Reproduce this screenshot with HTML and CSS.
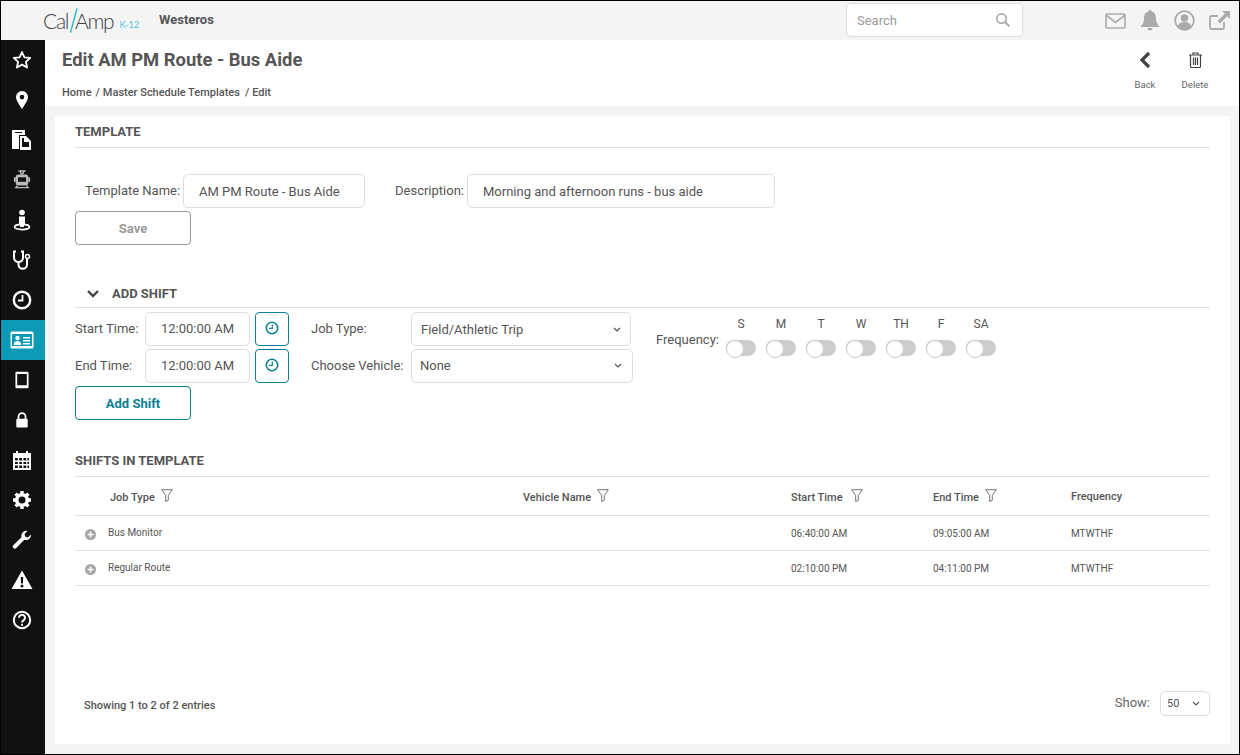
FILE: index.html
```html
<!DOCTYPE html>
<html lang="en">
<head>
<meta charset="utf-8">
<title>Edit AM PM Route - Bus Aide</title>
<link rel="stylesheet" href="styles.css">
</head>
<body>
<div class="app">
  <header class="topbar">
    <div class="logo"><span class="logo-cal">Cal</span><svg class="logo-slash" width="9" height="25" viewBox="0 0 9 25"><path d="M8 .5 1.500 24.500" stroke="#29b4d0" stroke-width="1.300" fill="none"/></svg><span class="logo-amp">Amp</span><span class="logo-k">K-12</span></div>
    <div class="org">Westeros</div>
    <div class="search">
      <span class="search-text">Search</span>
      <svg class="search-icon" width="15" height="15" viewBox="0 0 16 16"><circle cx="7" cy="7" r="5" fill="none" stroke="#aaa" stroke-width="1.800"/><path d="m10.800 10.800 4 4" stroke="#aaa" stroke-width="2.200" stroke-linecap="round"/></svg>
    </div>
    <div class="top-icons">
      <svg width="21" height="16" viewBox="0 0 21 16"><rect x="1" y="1" width="19" height="14" rx="1" fill="none" stroke="#aaa" stroke-width="1.600"/><path d="m1.500 2.500 9 7 9-7" fill="none" stroke="#aaa" stroke-width="1.600"/></svg>
      <svg width="20" height="21" viewBox="0 0 20 21"><path d="M10 0c1 0 1.600.7 1.600 1.600 3 .7 4.400 3.300 4.400 6.400 0 4 1 6 3 8v1H1v-1c2-2 3-4 3-8 0-3.100 1.400-5.700 4.400-6.400C8.400.7 9 0 10 0ZM7.500 18h5a2.500 2.500 0 0 1-5 0Z" fill="#aaa"/></svg>
      <svg width="21" height="21" viewBox="0 0 21 21"><circle cx="10.500" cy="10.500" r="9.300" fill="none" stroke="#aaa" stroke-width="1.800"/><circle cx="10.500" cy="8" r="3.800" fill="#aaa"/><path d="M3.800 16.500c1-3.500 3.500-4.500 6.700-4.500s5.700 1 6.700 4.500c-3.500 3.800-9.900 3.800-13.400 0Z" fill="#aaa"/></svg>
      <svg width="21" height="19" viewBox="0 0 21 19"><path d="M15 11v5.500a1.500 1.500 0 0 1-1.500 1.500h-11A1.500 1.500 0 0 1 1 16.500v-10A1.500 1.500 0 0 1 2.500 5H9" fill="none" stroke="#aaa" stroke-width="1.800"/><path d="M13 0h8v8l-2.800-2.800L11 12.400 8.600 10l7.200-7.200Z" fill="#aaa"/></svg>
    </div>
  </header>
  <div class="body-row">
    <nav class="sidebar">
      <a class="nav-item"><svg width="20" height="20" viewBox="0 0 20 20"><path d="m10 2 2.400 5.300 5.800.6-4.300 3.900 1.200 5.700L10 14.600l-5.100 2.900 1.200-5.700L1.800 7.900l5.800-.6Z" fill="none" stroke="#fff" stroke-width="1.800" stroke-linejoin="round"/></svg></a>
      <a class="nav-item"><svg width="20" height="20" viewBox="0 0 20 20"><path fill-rule="evenodd" d="M10 1a6 6 0 0 1 6 6c0 3.500-3.500 8-6 12-2.500-4-6-8.500-6-12a6 6 0 0 1 6-6Zm0 3.800a2.300 2.300 0 1 0 0 4.600 2.300 2.300 0 0 0 0-4.600Z" fill="#fff"/></svg></a>
      <a class="nav-item"><svg width="22" height="22" viewBox="0 0 22 22"><path d="M1 1h13v5H8v14H1Z" fill="#fff"/><path d="M9 7h6l5 5v9H9Z" fill="#fff"/><path d="M4 3.500h7" stroke="#111" stroke-width="1"/><path d="M11 9v9h7v-5h-5V9Z" fill="#111"/></svg></a>
      <a class="nav-item"><svg width="18" height="20" viewBox="0 0 20 22"><path d="M6 1h8M8 1l1 3h2l1-3" stroke="#bbb" stroke-width="1.500" fill="none"/><rect x="3" y="5" width="14" height="12" rx="3" fill="#bbb"/><rect x="1" y="8" width="2" height="5" fill="#bbb"/><rect x="17" y="8" width="2" height="5" fill="#bbb"/><rect x="5.500" y="8" width="9" height="5" fill="#111"/><path d="M2 19.500h16M5 17l-2 3M15 17l2 3" stroke="#bbb" stroke-width="1.400" fill="none"/></svg></a>
      <a class="nav-item"><svg width="20" height="22" viewBox="0 0 20 22"><circle cx="10" cy="3.500" r="2.800" fill="#fff"/><path d="M7 7.500h6v7.500h-1v3H8v-3H7Z" fill="#fff"/><ellipse cx="10" cy="18" rx="7.500" ry="2.600" fill="none" stroke="#fff" stroke-width="1.600"/></svg></a>
      <a class="nav-item"><svg width="20" height="20" viewBox="0 0 20 20"><path d="M4 1.500H2v6a4.500 4.500 0 0 0 9 0v-6H9" fill="none" stroke="#fff" stroke-width="2"/><path d="M6.500 12v2.500a4.200 4.200 0 0 0 8.500 0V9" fill="none" stroke="#fff" stroke-width="2"/><circle cx="15.500" cy="6.500" r="2" fill="none" stroke="#fff" stroke-width="1.500"/></svg></a>
      <a class="nav-item"><svg width="20" height="20" viewBox="0 0 20 20"><circle cx="10" cy="10" r="8.200" fill="none" stroke="#fff" stroke-width="2.400"/><path d="M10.500 5v5.500H6" fill="none" stroke="#fff" stroke-width="1.800"/></svg></a>
      <a class="nav-item nav-active"><svg width="24" height="18" viewBox="0 0 24 18"><rect x=".5" y=".5" width="23" height="17" rx="1.500" fill="#fff"/><rect x="2" y="3" width="20" height="12" fill="#0a9ab5"/><circle cx="7.500" cy="7" r="2.200" fill="#fff"/><path d="M3.800 14c0-3 1.500-4 3.700-4s3.700 1 3.700 4Z" fill="#fff"/><path d="M13 6h7v1.500h-7ZM13 9h7v1.500h-7ZM13 12h7v1.500h-7Z" fill="#fff"/></svg></a>
      <a class="nav-item"><svg width="14" height="18" viewBox="0 0 16 20"><path fill-rule="evenodd" d="M2 .5h12A1.500 1.500 0 0 1 15.500 2v16a1.500 1.500 0 0 1-1.500 1.500H2A1.500 1.500 0 0 1 .5 18V2A1.500 1.500 0 0 1 2 .5Zm.5 2.500v13h11V3Z" fill="#fff"/></svg></a>
      <a class="nav-item"><svg width="14" height="18" viewBox="0 0 16 20"><path d="M4 9V6a4 4 0 0 1 8 0v3" fill="none" stroke="#fff" stroke-width="2"/><rect x="1.500" y="8.500" width="13" height="10" rx="1.500" fill="#fff"/></svg></a>
      <a class="nav-item"><svg width="20" height="21" viewBox="0 0 20 21"><path fill-rule="evenodd" d="M1.500 3H4V1h2v2h8V1h2v2h2.500a.5.500 0 0 1 .5.500v16a.5.500 0 0 1-.5.500h-17a.5.500 0 0 1-.5-.500v-16a.5.500 0 0 1 .5-.500ZM3 8v2.500h2.800V8Zm4.200 0v2.500H10V8Zm4.200 0v2.500h2.800V8Zm4 0v2.500H17V8ZM3 12v2h2.800v-2Zm4.200 0v2H10v-2Zm4.200 0v2h2.800v-2Zm4 0v2H17v-2ZM3 15.500V18h2.800v-2.500Zm4.200 0V18H10v-2.500Zm4.200 0V18h2.800v-2.500Zm4 0V18H17v-2.500Z" fill="#fff"/></svg></a>
      <a class="nav-item"><svg width="20" height="20" viewBox="0 0 20 20"><circle cx="10" cy="10" r="5.300" fill="none" stroke="#fff" stroke-width="3.600"/><g stroke="#fff" stroke-width="3.400"><path d="M10 1v3M10 16v3M1 10h3M16 10h3M3.600 3.600l2.200 2.200M14.200 14.200l2.200 2.200M3.600 16.400l2.200-2.200M14.200 5.800l2.200-2.200"/></g></svg></a>
      <a class="nav-item"><svg width="20" height="20" viewBox="0 0 20 20"><path d="M19 4.500a5 5 0 0 1-6.700 5.200l-8 8.300a2 2 0 0 1-3-2.800l8.200-8A5 5 0 0 1 15.500 1l-3 3 .8 2.700 2.700.8Z" fill="#fff"/></svg></a>
      <a class="nav-item"><svg width="22" height="20" viewBox="0 0 22 20"><path fill-rule="evenodd" d="M11 .5 21.500 19H.5ZM9.800 7l.3 6.500h1.800l.3-6.500Zm1.200 7.500a1.500 1.500 0 1 0 0 3 1.500 1.500 0 0 0 0-3Z" fill="#fff"/></svg></a>
      <a class="nav-item"><svg width="20" height="20" viewBox="0 0 20 20"><circle cx="10" cy="10" r="8.200" fill="none" stroke="#fff" stroke-width="2"/><path d="M7 7.800a3 3 0 1 1 4.500 2.600c-1 .6-1.500 1-1.500 2.200" fill="none" stroke="#fff" stroke-width="2"/><rect x="9" y="13.800" width="2" height="2" fill="#fff"/></svg></a>
    </nav>
    <main class="main">
      <section class="page-head">
        <div class="page-titles">
          <h1 class="page-title">Edit AM PM Route - Bus Aide</h1>
          <div class="crumbs">Home<span class="sep sep-first">/</span>Master Schedule Templates<span class="sep">/</span>Edit</div>
        </div>
        <div class="page-actions">
          <a class="action">
            <svg width="14" height="18" viewBox="0 0 14 18"><path d="M11 2 4 9l7 7" fill="none" stroke="#444" stroke-width="3.200"/></svg>
            <span>Back</span>
          </a>
          <a class="action">
            <svg width="15" height="17" viewBox="0 0 15 17"><path d="M1 3.500h13M5 3.500V1.500h5v2" fill="none" stroke="#444" stroke-width="1.200"/><path d="M2.500 3.500V15a1 1 0 0 0 1 1h8a1 1 0 0 0 1-1V3.500" fill="none" stroke="#444" stroke-width="1.200"/><path d="M5.500 6v7.500M7.500 6v7.500M9.500 6v7.500" stroke="#444" stroke-width="1.200"/></svg>
            <span>Delete</span>
          </a>
        </div>
      </section>
      <section class="card">
        <h2 class="section-head section-template">TEMPLATE</h2>
        <div class="template-row">
          <label class="lbl lbl-name">Template Name:</label>
          <input class="field field-name" value="AM PM Route - Bus Aide">
          <label class="lbl lbl-desc">Description:</label>
          <input class="field field-desc" value="Morning and afternoon runs - bus aide">
        </div>
        <button class="btn btn-muted">Save</button>

        <h2 class="section-head section-add">
          <svg width="14" height="10" viewBox="0 0 14 10"><path d="m2 2 5 5 5-5" fill="none" stroke="#444" stroke-width="2.400"/></svg>
          ADD SHIFT
        </h2>
        <div class="shift-form">
          <div class="time-grid">
            <label class="lbl">Start Time:</label>
            <input class="field field-time" value="12:00:00 AM">
            <button class="clock-btn"><svg width="14" height="14" viewBox="0 0 14 14"><circle cx="7" cy="7" r="5.700" fill="none" stroke="#0a7f96" stroke-width="1.600"/><path d="M7.300 3.500v3.800H4.200" fill="none" stroke="#0a7f96" stroke-width="1.200"/></svg></button>
            <label class="lbl">End Time:</label>
            <input class="field field-time" value="12:00:00 AM">
            <button class="clock-btn"><svg width="14" height="14" viewBox="0 0 14 14"><circle cx="7" cy="7" r="5.700" fill="none" stroke="#0a7f96" stroke-width="1.600"/><path d="M7.300 3.500v3.800H4.200" fill="none" stroke="#0a7f96" stroke-width="1.200"/></svg></button>
          </div>
          <div class="select-grid">
            <label class="lbl">Job Type:</label>
            <div class="select select-job"><span>Field/Athletic Trip</span><svg width="8" height="5" viewBox="0 0 8 5"><path d="m1 1 3 3 3-3" fill="none" stroke="#555" stroke-width="1.200"/></svg></div>
            <label class="lbl">Choose Vehicle:</label>
            <div class="select select-veh"><span>None</span><svg width="8" height="5" viewBox="0 0 8 5"><path d="m1 1 3 3 3-3" fill="none" stroke="#555" stroke-width="1.200"/></svg></div>
          </div>
          <div class="freq">
            <label class="lbl freq-lbl">Frequency:</label>
            <div class="days">
              <div class="day"><span>S</span><i class="toggle"></i></div>
              <div class="day"><span>M</span><i class="toggle"></i></div>
              <div class="day"><span>T</span><i class="toggle"></i></div>
              <div class="day"><span>W</span><i class="toggle"></i></div>
              <div class="day"><span>TH</span><i class="toggle"></i></div>
              <div class="day"><span>F</span><i class="toggle"></i></div>
              <div class="day"><span>SA</span><i class="toggle"></i></div>
            </div>
          </div>
        </div>
        <button class="btn btn-teal">Add Shift</button>

        <h2 class="section-head section-shifts">SHIFTS IN TEMPLATE</h2>
        <table class="grid">
          <colgroup><col class="c1"><col class="c2"><col class="c3"><col class="c4"><col class="c5"></colgroup>
          <thead>
            <tr>
              <th class="th-first">Job Type <svg class="filter" width="12" height="13" viewBox="0 0 12 13"><path d="M.7.700h10.600L7.300 6.500v4.800l-2.600 1.200v-6Z" fill="none" stroke="#666" stroke-width=".9"/></svg></th>
              <th>Vehicle Name <svg class="filter" width="12" height="13" viewBox="0 0 12 13"><path d="M.7.700h10.600L7.300 6.500v4.800l-2.600 1.200v-6Z" fill="none" stroke="#666" stroke-width=".9"/></svg></th>
              <th>Start Time &nbsp;<svg class="filter" width="12" height="13" viewBox="0 0 12 13"><path d="M.7.700h10.600L7.300 6.500v4.800l-2.600 1.200v-6Z" fill="none" stroke="#666" stroke-width=".9"/></svg></th>
              <th>End Time <svg class="filter" width="12" height="13" viewBox="0 0 12 13"><path d="M.7.700h10.600L7.300 6.500v4.800l-2.600 1.200v-6Z" fill="none" stroke="#666" stroke-width=".9"/></svg></th>
              <th>Frequency</th>
            </tr>
          </thead>
          <tbody>
            <tr>
              <td class="td-first"><svg class="plus" width="11" height="11" viewBox="0 0 11 11"><circle cx="5.500" cy="5.500" r="5.500" fill="#a5a5a5"/><path d="M2.500 5.500h6M5.500 2.500v6" stroke="#fff" stroke-width="1.500"/></svg>Bus Monitor</td>
              <td></td><td>06:40:00 AM</td><td>09:05:00 AM</td><td>MTWTHF</td>
            </tr>
            <tr>
              <td class="td-first"><svg class="plus" width="11" height="11" viewBox="0 0 11 11"><circle cx="5.500" cy="5.500" r="5.500" fill="#a5a5a5"/><path d="M2.500 5.500h6M5.500 2.500v6" stroke="#fff" stroke-width="1.500"/></svg>Regular Route</td>
              <td></td><td>02:10:00 PM</td><td>04:11:00 PM</td><td>MTWTHF</td>
            </tr>
          </tbody>
        </table>
        <div class="table-foot">
          <div class="entries">Showing 1 to 2 of 2 entries</div>
          <div class="show">
            <span class="show-lbl">Show:</span>
            <div class="select select-show"><span>50</span><svg width="8" height="5" viewBox="0 0 8 5"><path d="m1 1 3 3 3-3" fill="none" stroke="#555" stroke-width="1.200"/></svg></div>
          </div>
        </div>
      </section>
    </main>
  </div>
</div>
</body>
</html>
```
FILE: styles.css
```css
* { box-sizing: border-box; }
html, body { margin: 0; padding: 0; }
body { font-family: Roboto, "Liberation Sans", sans-serif; color: #555; overflow: hidden; }
svg { display: block; flex: none; }
.app { width: 1240px; height: 755px; border: 1px solid #000; display: flex; flex-direction: column; background: #f4f4f4; overflow: hidden; }

.topbar { height: 39px; flex: none; display: flex; align-items: center; background: #f4f4f4; }
.logo { display: flex; align-items: center; margin-left: 42px; width: 116px; color: #3c4146; font-family: Lato, sans-serif; font-weight: 300; font-size: 21px; letter-spacing: -1.300px; }
.logo-slash { margin: 0 -3px 0 1px; }
.logo-k { font-size: 9.500px; color: #4dc3dc; margin-left: 6px; margin-top: 8px; letter-spacing: -.2px; font-weight: 400; }
.org { font-size: 13px; font-weight: 700; color: #555; width: 687px; margin-top: -2px; }
.search { width: 177px; height: 34px; background: #fff; border: 1px solid #ddd; border-radius: 5px; display: flex; align-items: center; justify-content: space-between; padding: 0 12px 0 10px; margin-top: -1px; }
.search-text { font-size: 13px; color: #999; }
.search-icon { margin-top: -2px; }
.top-icons { display: flex; align-items: center; gap: 14px; margin-left: 82px; }

.body-row { flex: 1; display: flex; min-height: 0; }
.sidebar { width: 44px; flex: none; background: #111; }
.nav-item { height: 40px; display: flex; align-items: center; justify-content: center; padding-right: 2px; }
.nav-active { background: #0a9ab5; }

.main { flex: 1; min-width: 0; display: flex; flex-direction: column; }
.page-head { height: 66px; flex: none; background: #fff; display: flex; justify-content: space-between; padding: 0 0 0 17px; }
.page-title { margin: 8px 0 0; font-size: 18.400px; line-height: 24px; font-weight: 700; color: #555; }
.crumbs { font-size: 11px; font-weight: 500; color: #555; margin-top: 14px; line-height: 14px; }
.sep { margin: 0 3px 0 5px; }
.sep-first { margin-left: 4px; }
.page-actions { display: flex; gap: 20px; padding: 11px 29px 0 0; }
.action { width: 30px; display: flex; flex-direction: column; align-items: center; gap: 10px; font-size: 9.500px; color: #666; }
.action svg { height: 18px; }

.card { margin: 10px 9px 10px 10px; flex: 1; background: #fff; padding: 0 20px; min-height: 0; }
.section-head { margin: 0; font-size: 13px; font-weight: 700; color: #555; line-height: 16px; border-bottom: 1px solid #e2e2e2; }
.section-template { padding: 8px 0 7px; height: 32px; }
.template-row { display: flex; align-items: center; margin-top: 26px; height: 34px; }
.lbl { font-size: 13px; color: #555; white-space: nowrap; margin-top: -2px; }
.lbl-name { margin-left: 10px; width: 98px; }
.lbl-desc { margin-left: 30px; width: 72px; }
.field { height: 34px; border: 1px solid #ddd; border-radius: 5px; background: #fff; font: 13px Roboto, sans-serif; color: #555; padding: 0 15px; outline: none; }
.field-name { width: 182px; }
.field-desc { width: 308px; }
.btn { display: block; width: 116px; height: 34px; border-radius: 4px; background: #fff; font: 700 13px Roboto, sans-serif; padding: 1px 0 0; }
.btn-muted { margin-top: 3px; border: 1px solid #999; color: #999; }
.section-add { margin-top: 40px; height: 23px; display: flex; align-items: center; gap: 11px; padding: 1px 0 5px 11px; }
.section-add svg { margin-right: 1px; }
.shift-form { display: flex; margin-top: 4px; height: 71px; }
.time-grid { display: grid; grid-template-columns: 70px 105px 34px; grid-auto-rows: 34px; row-gap: 3px; align-items: center; }
.field-time { width: 105px; padding: 0 0 2px; text-align: center; }
.clock-btn { width: 34px; height: 34px; margin-left: 5px; border: 1px solid #0a7f96; border-radius: 4px; background: #fff; padding: 0 0 3px; display: flex; align-items: center; justify-content: center; }
.select-grid { display: grid; grid-template-columns: 100px auto; grid-auto-rows: 34px; row-gap: 3px; margin-left: 27px; align-items: center; }
.select { height: 34px; border: 1px solid #ddd; border-radius: 5px; background: #fff; display: flex; align-items: center; justify-content: space-between; font-size: 13px; color: #555; }
.select-job { width: 220px; padding: 0 9px; }
.select-veh { width: 222px; padding: 0 10px 2px 8px; }
.freq { display: flex; margin-left: 23px; }
.freq-lbl { margin-top: 20px; width: 70px; }
.days { display: flex; margin-left: -5px; }
.day { width: 40px; display: flex; flex-direction: column; align-items: center; gap: 9px; font-size: 12px; color: #555; padding-top: 5px; line-height: 14px; }
.toggle { display: block; width: 30px; height: 16px; border-radius: 8px; background: #ccc; position: relative; }
.toggle::before { content: ""; position: absolute; left: 0; top: 0; width: 16px; height: 16px; border-radius: 50%; background: #fff; border: 1px solid #ccc; }
.btn-teal { margin-top: 3px; border: 1px solid #0a7f96; color: #0a7f96; }
.section-shifts { margin-top: 32px; height: 25px; padding: 1px 0 7px; }
.grid { width: 1135px; border-collapse: collapse; table-layout: fixed; }
.c1 { width: 448px; } .c2 { width: 268px; } .c3 { width: 142px; } .c4 { width: 138px; } .c5 { width: 139px; }
.grid th { height: 38px; text-align: left; font-size: 11px; font-weight: 500; color: #555; padding: 1px 0 0; border-bottom: 1px solid #e2e2e2; white-space: nowrap; }
.grid td { height: 35px; font-size: 10px; color: #555; padding: 2px 0 0; border-bottom: 1px solid #e2e2e2; white-space: nowrap; }
.filter { display: inline-block; margin-left: 3px; vertical-align: -1px; }
.grid th.th-first { padding-left: 35px; }
.grid td.td-first { padding-left: 10px; }
.plus { display: inline-block; margin-right: 12px; vertical-align: -4px; }
.table-foot { display: flex; justify-content: space-between; align-items: center; margin-top: 105px; height: 26px; }
.entries { font-size: 11px; font-weight: 500; color: #555; margin-left: 9px; margin-top: 4px; }
.show { display: flex; align-items: center; gap: 10px; }
.show-lbl { font-size: 13px; color: #666; margin-top: -3px; }
.select-show { width: 50px; height: 25px; font-size: 11px; padding: 0 9px 0 6px; }
```
